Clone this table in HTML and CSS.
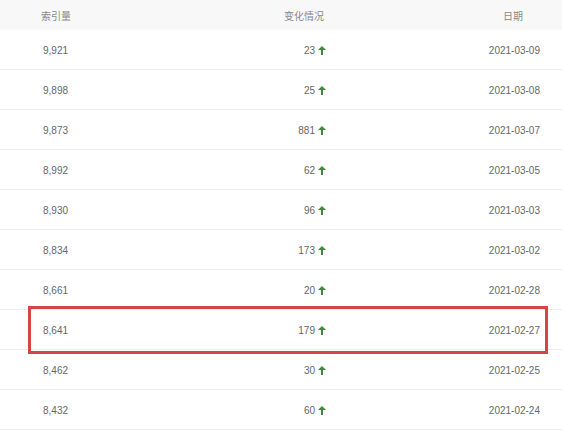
FILE: index.html
```html
<!DOCTYPE html>
<html>
<head>
<meta charset="utf-8">
<link rel="stylesheet" href="styles.css">
</head>
<body>
<div class="table">
  <div class="row head">
    <div class="c1">索引量</div>
    <div class="c2">变化情况</div>
    <div class="c3">日期</div>
  </div>
  <div class="row"><div class="c1">9,921</div><div class="c2">23<span class="up"></span></div><div class="c3">2021-03-09</div></div>
  <div class="row"><div class="c1">9,898</div><div class="c2">25<span class="up"></span></div><div class="c3">2021-03-08</div></div>
  <div class="row"><div class="c1">9,873</div><div class="c2">881<span class="up"></span></div><div class="c3">2021-03-07</div></div>
  <div class="row"><div class="c1">8,992</div><div class="c2">62<span class="up"></span></div><div class="c3">2021-03-05</div></div>
  <div class="row"><div class="c1">8,930</div><div class="c2">96<span class="up"></span></div><div class="c3">2021-03-03</div></div>
  <div class="row"><div class="c1">8,834</div><div class="c2">173<span class="up"></span></div><div class="c3">2021-03-02</div></div>
  <div class="row"><div class="c1">8,661</div><div class="c2">20<span class="up"></span></div><div class="c3">2021-02-28</div></div>
  <div class="row"><div class="c1">8,641</div><div class="c2">179<span class="up"></span></div><div class="c3">2021-02-27</div></div>
  <div class="row"><div class="c1">8,462</div><div class="c2">30<span class="up"></span></div><div class="c3">2021-02-25</div></div>
  <div class="row"><div class="c1">8,432</div><div class="c2">60<span class="up"></span></div><div class="c3">2021-02-24</div></div>
  <div class="highlight"></div>
</div>
</body>
</html>
```
FILE: styles.css
```css
html, body {
  margin: 0;
  padding: 0;
  background: #fff;
}
body {
  font-family: "Liberation Sans", "Noto Sans CJK SC", sans-serif;
  font-size: 10px;
  color: #666;
  overflow: hidden;
}
.table {
  position: relative;
  width: 562px;
}
.row {
  display: flex;
  align-items: center;
  height: 40px;
  box-sizing: border-box;
  padding-top: 1px;
  border-bottom: 1px solid #eeeeee;
}
.row.head {
  height: 30px;
  padding-top: 0;
  border-bottom: none;
  background: #f8f8f8;
  color: #888;
  font-family: "Noto Sans CJK SC", sans-serif;
  font-size: 10px;
}
.c1 {
  width: 200px;
  padding-left: 43px;
  box-sizing: border-box;
}
.head .c1 { padding-left: 41px; }
.c2 {
  width: 130px;
  box-sizing: border-box;
  padding-right: 4px;
  display: flex;
  justify-content: flex-end;
  align-items: center;
}
.head .c2 { padding-right: 6px; }
.c3 {
  flex: 1;
  text-align: right;
  padding-right: 22px;
}
.head .c3 { padding-right: 39px; }
.up {
  display: inline-block;
  width: 8px;
  height: 9px;
  margin-left: 3px;
  position: relative;
}
.up::before {
  content: "";
  position: absolute;
  left: 3px;
  top: 2px;
  width: 2px;
  height: 7px;
  background: #3d8a3d;
}
.up::after {
  content: "";
  position: absolute;
  left: 0;
  top: 0;
  border-left: 4px solid transparent;
  border-right: 4px solid transparent;
  border-bottom: 4px solid #3d8a3d;
}
.highlight {
  position: absolute;
  left: 28px;
  top: 306px;
  width: 520px;
  height: 48px;
  box-sizing: border-box;
  border: 3px solid #d64545;
}
```
